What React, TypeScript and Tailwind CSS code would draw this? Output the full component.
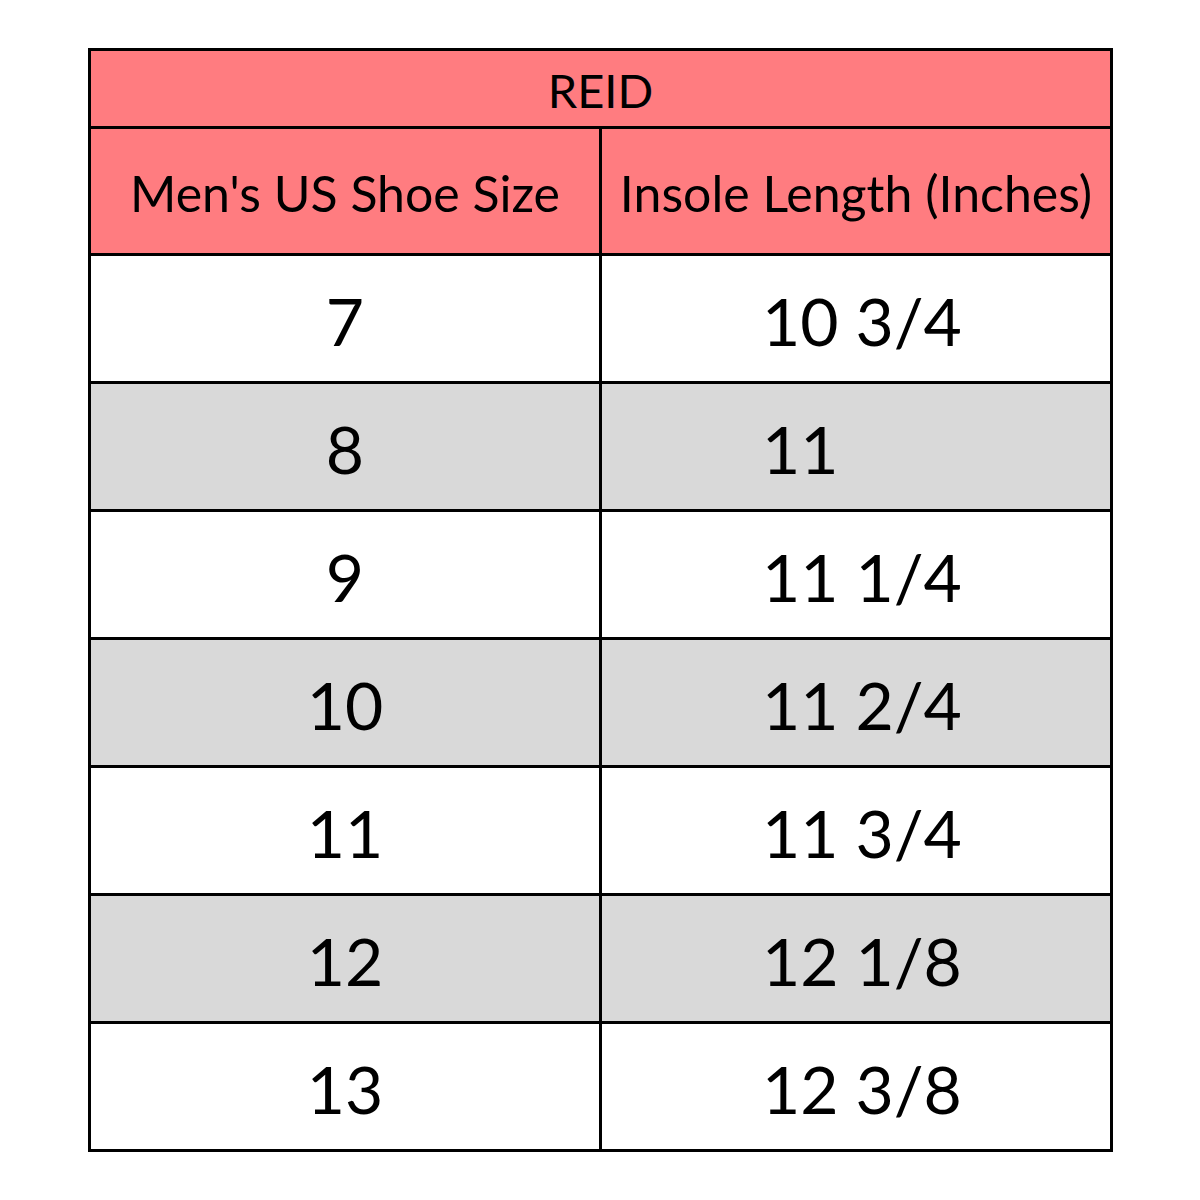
const rows = [
  { size: "7", length: "10 3/4" },
  { size: "8", length: "11" },
  { size: "9", length: "11 1/4" },
  { size: "10", length: "11 2/4" },
  { size: "11", length: "11 3/4" },
  { size: "12", length: "12 1/8" },
  { size: "13", length: "12 3/8" },
];

export default function App() {
  return (
    <div
      className="h-[1200px] w-[1200px] bg-white pl-[88px] pt-[48px] text-black"
      style={{ fontFamily: "Lato, 'Open Sans', sans-serif" }}
    >
      <div className="flex w-[1025px] flex-col border-[3px] border-black">
        {/* title row */}
        <div className="flex h-[75px] items-center justify-center bg-[#ff7c80] pt-[4px] text-[47px] leading-none">
          REID
        </div>

        {/* column headings */}
        <div className="flex h-[127px] border-t-[3px] border-black bg-[#ff7c80] text-[50px] leading-none">
          <div className="flex w-[511px] items-center justify-center border-r-[3px] border-black pt-[4px]">
            Men's US Shoe Size
          </div>
          <div className="flex flex-1 items-center justify-center whitespace-nowrap pt-[4px]">
            Insole Length (Inches)
          </div>
        </div>

        {rows.map((row, i) => (
          <div
            key={row.size}
            className={`flex h-[128px] border-t-[3px] border-black text-[66px] leading-none ${
              i % 2 === 1 ? "bg-[#d9d9d9]" : "bg-white"
            }`}
          >
            <div className="flex w-[511px] items-center justify-center border-r-[3px] border-black pt-[5px]">
              {row.size}
            </div>
            <div className="flex flex-1 items-center pl-[160px] pt-[5px]">{row.length}</div>
          </div>
        ))}
      </div>
    </div>
  );
}
